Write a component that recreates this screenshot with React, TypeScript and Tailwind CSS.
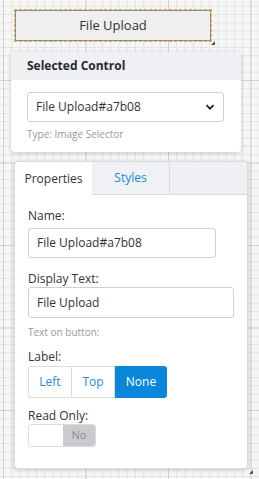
import React from "react";

const gridStyle =
  "bg-[#f6f6f6] [background-image:linear-gradient(to_right,#cfcfcf_1px,transparent_1px),linear-gradient(to_bottom,#cfcfcf_1px,transparent_1px),linear-gradient(to_right,#e3e3e3_1px,transparent_1px),linear-gradient(to_bottom,#e3e3e3_1px,transparent_1px)] [background-size:82.5px_82.5px,82.5px_82.5px,8.25px_8.25px,8.25px_8.25px] [background-position:3px_-2.5px,3px_-2.5px,3px_-2.5px,3px_-2.5px]";

export default function App() {
  return (
    <div
      className={`relative w-[259px] h-[479px] overflow-hidden ${gridStyle} text-[#333] [font-family:'Open_Sans',sans-serif]`}
    >
      <div className="pt-[10px] pl-[15px]">
        <div className="relative w-[196px] h-[31px] bg-[#efefef] border border-[#8c8c8c] outline outline-[1.5px] outline-dashed outline-[#f2a93b] flex items-center justify-center text-[13px] text-[#333]">
          File Upload
          <div className="absolute right-[-5px] bottom-[-5px] w-0 h-0 border-l-[4px] border-l-transparent border-b-[4px] border-b-[#555]" />
        </div>
      </div>

      <div className="ml-[11px] mt-[11px] w-[230px] rounded-[4px] bg-white shadow-[0_1px_4px_rgba(0,0,0,0.18)] overflow-hidden">
        <div className="h-[28px] bg-[#eef0f4] px-[16px] flex items-center text-[12px] font-bold text-[#2a2a2a]">
          Selected Control
        </div>
        <div className="px-[16px] pt-[12px] pb-[11px]">
          <div className="w-[197px] h-[30px] border border-[#cfcfcf] rounded-[3px] flex items-center justify-between pl-[8px] pr-[8px] text-[12px] text-[#333]">
            <span>File Upload#a7b08</span>
            <svg width="10" height="10" viewBox="0 0 10 10">
              <path d="M1.5 3.2 L5 6.7 L8.5 3.2" fill="none" stroke="#222" strokeWidth="1.8" />
            </svg>
          </div>
          <div className="mt-[5px] text-[10px] text-[#9a9a9a] leading-[14px]">Type: Image Selector</div>
        </div>
      </div>

      <div className="relative ml-[14px] mt-[9px] w-[234px] h-[308px] rounded-[4px] bg-white shadow-[0_1px_4px_rgba(0,0,0,0.2)] border border-[#dcdcdc]">
        <div className="flex h-[33px] text-[12px]">
          <div className="w-[77px] flex items-center justify-center bg-white text-[#333] rounded-tl-[4px]">
            Properties
          </div>
          <div className="w-[77px] flex items-center justify-center bg-[#f0f1f4] text-[#1a88d6] border-b border-[#dcdcdc]">
            Styles
          </div>
          <div className="flex-1 bg-[#eef0f3] border-l border-[#dcdcdc] border-b rounded-tr-[4px]" />
        </div>
        <div className="px-[13px] pt-[13px] text-[12px]">
          <div className="leading-[16px] text-[#333]">Name:</div>
          <div className="mt-[4px] w-[188px] h-[30px] border border-[#d0d0d0] rounded-[3px] flex items-center pl-[8px] text-[#333]">
            File Upload#a7b08
          </div>
          <div className="mt-[13px] leading-[16px]">Display Text:</div>
          <div className="mt-[0px] w-[206px] h-[31px] border border-[#d0d0d0] rounded-[3px] flex items-center pl-[8px]">
            File Upload
          </div>
          <div className="mt-[7px] text-[10px] text-[#9a9a9a] leading-[14px]">Text on button:</div>
          <div className="mt-[10px] leading-[16px]">Label:</div>
          <div className="mt-[1px] flex h-[32px] w-[139px] text-[12px]">
            <div className="w-[44px] flex items-center justify-center border border-[#dcdcdc] rounded-l-[3px] text-[#2a8ad8]">
              Left
            </div>
            <div className="w-[43px] flex items-center justify-center border-y border-r border-[#dcdcdc] text-[#2a8ad8]">
              Top
            </div>
            <div className="flex-1 flex items-center justify-center bg-[#0a86da] text-white rounded-r-[3px]">
              None
            </div>
          </div>
          <div className="mt-[10px] leading-[16px]">Read Only:</div>
          <div className="mt-[0px] flex h-[23px] w-[68px] rounded-[3px] border border-[#dcdcdc] overflow-hidden text-[11px]">
            <div className="w-[34px] bg-white" />
            <div className="flex-1 bg-[#c9cbce] flex items-center justify-center text-[#8a8a8a]">No</div>
          </div>
        </div>
        <div className="absolute right-[-6px] bottom-[-6px] w-0 h-0 border-l-[4px] border-l-transparent border-b-[4px] border-b-[#555]" />
      </div>
    </div>
  );
}
